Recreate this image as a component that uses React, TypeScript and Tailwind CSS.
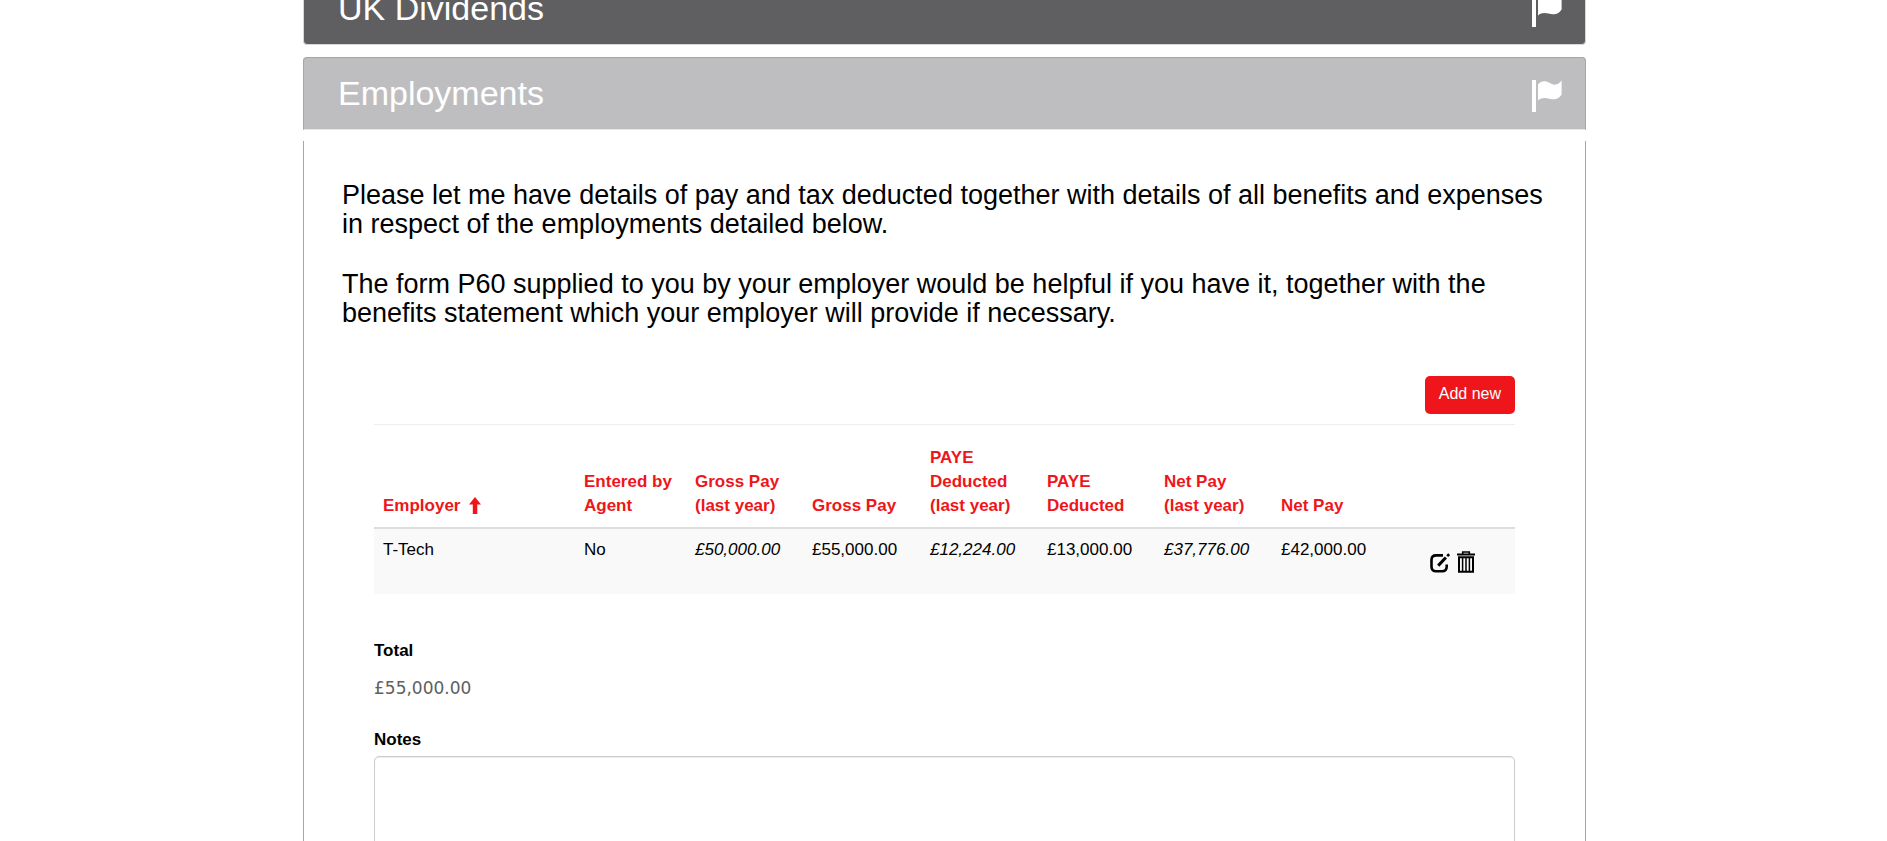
import { useState } from 'react';

interface Employment {
  employer: string;
  enteredByAgent: string;
  grossPayLastYear: string;
  grossPay: string;
  payeLastYear: string;
  paye: string;
  netPayLastYear: string;
  netPay: string;
}

const employments: Employment[] = [
  {
    employer: 'T-Tech',
    enteredByAgent: 'No',
    grossPayLastYear: '£50,000.00',
    grossPay: '£55,000.00',
    payeLastYear: '£12,224.00',
    paye: '£13,000.00',
    netPayLastYear: '£37,776.00',
    netPay: '£42,000.00',
  },
];

const columns = [
  { label: 'Employer', width: 'w-[201px]' },
  { label: 'Entered by Agent', width: 'w-[111px]' },
  { label: 'Gross Pay (last year)', width: 'w-[117px]' },
  { label: 'Gross Pay', width: 'w-[118px]' },
  { label: 'PAYE Deducted (last year)', width: 'w-[117px]' },
  { label: 'PAYE Deducted', width: 'w-[117px]' },
  { label: 'Net Pay (last year)', width: 'w-[117px]' },
  { label: 'Net Pay', width: 'w-[117px]' },
];

function FlagIcon() {
  return (
    <svg width="30" height="36" viewBox="0 0 30 36" fill="currentColor" aria-hidden="true">
      <rect x="0" y="4" width="4" height="32" />
      <path d="M6 8.5C8.5 5.6 11.5 4.6 15 5.8C19 7.2 21 9.2 24 8.6C26.5 8.1 28.3 6.3 29.6 4.2V18.5C27.5 22 24.5 23.6 20.5 23.2C16.5 22.8 10.5 19.8 6 24.5Z" />
    </svg>
  );
}

function ArrowUpIcon() {
  return (
    <svg width="12" height="17" viewBox="0 0 12 17" fill="currentColor" aria-hidden="true">
      <path d="M6 0L12 7.5H8.3V17H3.8V7.5H0Z" />
    </svg>
  );
}

function EditIcon() {
  return (
    <svg width="20" height="22" viewBox="0 0 20 22" fill="none" stroke="currentColor" aria-hidden="true">
      <path d="M13 4.4H6.2C3.3 4.4 1.5 6.2 1.5 9V15.5C1.5 18.5 3.3 20.3 6.2 20.3H12C15 20.3 16.7 18.5 16.7 15.5V13.5" strokeWidth="2.6" />
      <path d="M8.2 14.6L15.9 6.5" strokeWidth="3" />
      <path d="M17.2 5.2L19.2 3.2" strokeWidth="2.6" />
    </svg>
  );
}

function TrashIcon() {
  return (
    <svg width="18" height="22" viewBox="0 0 18 22" fill="none" stroke="currentColor" aria-hidden="true">
      <path d="M0 3.5H18" strokeWidth="2" />
      <path d="M5.7 3V1H12.3V3" strokeWidth="1.6" />
      <path d="M2 6.3H16V20.8H2Z" strokeWidth="2" />
      <path d="M5.6 7V20M9 7V20M12.4 7V20" strokeWidth="1.5" />
    </svg>
  );
}

export default function App() {
  const [notes, setNotes] = useState('');

  return (
    <main className="overflow-hidden bg-white pl-0.5 font-['Liberation_Sans',Arial,sans-serif] text-black">
      <div className="mx-auto w-full max-w-[1283px]">
        {/* Section headings */}
        <h2 className="-mt-7 flex h-[73px] items-center justify-between rounded-[4px] border border-[#d8d8d8] bg-[#5f5f61] pl-[34px] pr-[23px] text-[34px] text-white">
          UK Dividends
          <FlagIcon />
        </h2>
        <h2 className="mt-3 flex h-[73px] items-center justify-between rounded-t-[4px] border border-[#a6a6a8] border-b-[#e6e6e6] bg-[#bebec0] pl-[34px] pr-[23px] text-[34px] text-white">
          Employments
          <FlagIcon />
        </h2>

        {/* Section body */}
        <section className="mt-[11px] border-x border-[#a6a6a6] pt-10">
          <div className="space-y-[31px] px-[38px] text-[27px] leading-[29px]">
            <p>
              Please let me have details of pay and tax deducted together with details of all benefits and expenses in
              respect of the employments detailed below.
            </p>
            <p>
              The form P60 supplied to you by your employer would be helpful if you have it, together with the benefits
              statement which your employer will provide if necessary.
            </p>
          </div>

          <div className="px-[70px] pt-12">
            <div className="flex justify-end border-b border-[#eeeeee] pb-2.5">
              <button type="button" className="h-[38px] rounded-[5px] bg-[#ee161a] px-3.5 pb-0.5 text-[16px] text-white">
                Add new
              </button>
            </div>

            <table className="w-full table-fixed text-left text-[17px] leading-6">
              <thead>
                <tr className="border-b-2 border-[#dddddd] align-bottom text-[#ee161a]">
                  {columns.map((column, index) => (
                    <th key={column.label} scope="col" className={`${column.width} px-[9px] pb-[9px] pt-[21px] font-bold`}>
                      {column.label}
                      {index === 0 && (
                        <span className="ml-[9px] inline-block pb-0.5 align-middle">
                          <ArrowUpIcon />
                        </span>
                      )}
                    </th>
                  ))}
                  <td />
                </tr>
              </thead>
              <tbody>
                {employments.map((row) => (
                  <tr key={row.employer} className="h-[66px] bg-[#f9f9f9] align-top">
                    <td className="px-[9px] pt-[9px]">{row.employer}</td>
                    <td className="px-[9px] pt-[9px]">{row.enteredByAgent}</td>
                    <td className="px-[9px] pt-[9px] italic">{row.grossPayLastYear}</td>
                    <td className="px-[9px] pt-[9px]">{row.grossPay}</td>
                    <td className="px-[9px] pt-[9px] italic">{row.payeLastYear}</td>
                    <td className="px-[9px] pt-[9px]">{row.paye}</td>
                    <td className="px-[9px] pt-[9px] italic">{row.netPayLastYear}</td>
                    <td className="px-[9px] pt-[9px]">{row.netPay}</td>
                    <td className="pt-[22px]">
                      <div className="flex justify-center gap-[7px]">
                        <button type="button" aria-label="Edit">
                          <EditIcon />
                        </button>
                        <button type="button" aria-label="Delete">
                          <TrashIcon />
                        </button>
                      </div>
                    </td>
                  </tr>
                ))}
              </tbody>
            </table>

            <h3 className="mt-[45px] text-[17px] font-bold leading-6">Total</h3>
            <p className="mt-[13px] font-['DejaVu_Sans',Verdana,sans-serif] text-[17px] leading-6 text-[#606060]">£55,000.00</p>

            <label htmlFor="notes" className="mt-7 block text-[17px] font-bold leading-6">
              Notes
            </label>
            <textarea
              id="notes"
              value={notes}
              onChange={(event) => setNotes(event.target.value)}
              className="mt-1 block h-40 w-full resize-none rounded-[5px] border border-[#cccccc] px-3 py-2 text-[17px] shadow-[inset_0_1px_1px_rgba(0,0,0,0.075)]"
            />
          </div>
        </section>
      </div>
    </main>
  );
}
